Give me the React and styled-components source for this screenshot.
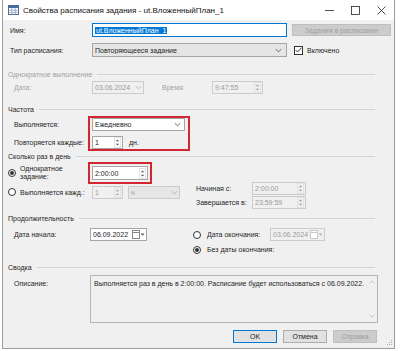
import React from 'react';
import styled, { createGlobalStyle } from 'styled-components';

const GlobalStyle = createGlobalStyle`
  html, body { margin: 0; padding: 0; background: #ffffff; }
  body {
    font-family: 'Liberation Sans', Arial, sans-serif;
    font-size: 7px;
    color: #1e1e1e;
  }
  * { box-sizing: border-box; }
`;

const Window = styled.div`
  margin-left: 2px;
  width: 393px;
  height: 349px;
  border: 1px solid #9c9c9c;
  border-top: none;
  background: #f0f0f0;
  display: flex;
  flex-direction: column;
  overflow: hidden;
`;

const TitleBar = styled.div`
  height: 20px;
  flex-shrink: 0;
  background: #ffffff;
  display: flex;
  align-items: center;
  padding-left: 5px;
`;

const TitleText = styled.span`
  flex: 1;
  margin-left: 4px;
  font-size: 8px;
  color: #111;
  white-space: nowrap;
`;

const WinButton = styled.div`
  width: 26px;
  height: 20px;
  display: flex;
  align-items: center;
  justify-content: center;
`;

const Body = styled.div`
  flex: 1;
  position: relative;
  padding: 0 3px 0 4px;
  display: flex;
  flex-direction: column;
`;

const TopRow = styled.div`
  height: 20px;
  display: flex;
  align-items: center;
  padding-left: 3px;
`;

const Label = styled.span`
  width: ${(p) => p.$w || 82}px;
  flex-shrink: 0;
  white-space: nowrap;
  color: ${(p) => (p.$disabled ? '#a3a3a3' : '#1e1e1e')};
`;

const Field = styled.div`
  width: ${(p) => p.$w}px;
  height: ${(p) => p.$h || 13}px;
  flex-shrink: 0;
  display: flex;
  align-items: center;
  padding: 0 1px 0 2px;
  background: ${(p) => p.$bg || (p.$disabled ? '#f0f0f0' : '#ffffff')};
  border: 1px solid ${(p) => (p.$focus ? '#0078d7' : p.$disabled ? '#cccccc' : '#a6a6a6')};
  color: ${(p) => (p.$disabled ? '#9a9a9a' : '#1e1e1e')};
  white-space: nowrap;
`;

const FieldText = styled.span`
  flex: 1;
  overflow: hidden;
`;

const Selected = styled.span`
  background: #0078d7;
  color: #ffffff;
  padding: 0 1px;
`;

const WinBtn = styled.div`
  width: ${(p) => p.$w}px;
  height: ${(p) => p.$h || 13}px;
  flex-shrink: 0;
  margin-left: ${(p) => p.$ml || 0}px;
  display: flex;
  align-items: center;
  justify-content: center;
  background: ${(p) => (p.$disabled ? '#cccccc' : '#e1e1e1')};
  border: 1px solid ${(p) => (p.$primary ? '#0078d7' : p.$disabled ? '#bfbfbf' : '#adadad')};
  color: ${(p) => (p.$disabled ? '#a0a0a0' : '#1e1e1e')};
  white-space: nowrap;
`;

const Check = styled.span`
  width: 9px;
  height: 9px;
  border: 1px solid #333;
  background: #fff;
  display: flex;
  align-items: center;
  justify-content: center;
  margin: 0 4px 0 ${(p) => p.$ml || 0}px;
`;

const Radio = styled.span`
  width: 8px;
  height: 8px;
  flex-shrink: 0;
  border-radius: 50%;
  border: 1px solid #333;
  background: #fff;
  margin-right: ${(p) => p.$mr || 4}px;
  display: flex;
  align-items: center;
  justify-content: center;
  &::after {
    content: '';
    width: 4px;
    height: 4px;
    border-radius: 50%;
    background: ${(p) => (p.$checked ? '#333' : 'transparent')};
  }
`;

const Group = styled.div`
  margin: ${(p) => p.$mt || 0}px 16px 0 1px;
`;

const GroupHeader = styled.div`
  height: 12px;
  display: flex;
  align-items: center;
  color: ${(p) => (p.$disabled ? '#a3a3a3' : '#1e1e1e')};
  white-space: nowrap;
  &::after {
    content: '';
    flex: 1;
    height: 1px;
    margin-left: 5px;
    background: #d4d4d4;
  }
`;

const GroupRow = styled.div`
  display: flex;
  align-items: ${(p) => p.$align || 'center'};
  height: ${(p) => (p.$h ? p.$h + 'px' : 'auto')};
  margin-top: ${(p) => p.$mt || 0}px;
  padding-left: ${(p) => (p.$pl === undefined ? 6 : p.$pl)}px;
`;

const Column = styled.div`
  display: flex;
  flex-direction: column;
  width: ${(p) => (p.$w ? p.$w + 'px' : 'auto')};
  margin-top: ${(p) => p.$mt || 0}px;
  margin-left: ${(p) => p.$ml || 0}px;
  flex-shrink: 0;
`;

const SubRow = styled.div`
  display: flex;
  align-items: center;
  height: ${(p) => p.$h}px;
  margin-top: ${(p) => p.$mt || 0}px;
  white-space: nowrap;
`;

const RedBox = styled.div`
  border: 2px solid #d22630;
  padding: ${(p) => p.$pad};
  display: flex;
  flex-direction: column;
  gap: ${(p) => p.$gap || 0}px;
`;

const TwoLine = styled.span`
  width: ${(p) => p.$w}px;
  line-height: 8.5px;
  flex-shrink: 0;
`;

const Unit = styled.span`
  margin-left: 6px;
`;

const TextArea = styled.div`
  width: 288px;
  height: 48px;
  border: 1px solid #b4b4b4;
  background: #f0f0f0;
  display: flex;
  flex-shrink: 0;
`;

const AreaText = styled.div`
  flex: 1;
  padding: 3px 3px;
  line-height: 9px;
  white-space: nowrap;
`;

const ScrollBar = styled.div`
  width: 10px;
  display: flex;
  flex-direction: column;
  justify-content: space-between;
  align-items: center;
  padding: 4px 0;
`;

const ButtonRow = styled.div`
  display: flex;
  justify-content: flex-end;
  gap: 6px;
  margin: 7px 14px 0 0;
`;

const Grip = styled.div`
  position: absolute;
  right: 1px;
  bottom: 1px;
`;

const Chevron = ({ color = '#5a5a5a' }) => (
  <svg width="7" height="5" viewBox="0 0 7 5">
    <path d="M0.8 1.2 L3.5 3.8 L6.2 1.2" fill="none" stroke={color} strokeWidth="0.9" />
  </svg>
);

const Spin = ({ color = '#555' }) => (
  <svg width="7" height="11" viewBox="0 0 7 11">
    <rect x="0.5" y="0.5" width="6" height="10" fill="none" stroke="#e2e2e2" />
    <path d="M1.8 4.2 L3.5 2.4 L5.2 4.2 Z" fill={color} />
    <path d="M1.8 6.8 L3.5 8.6 L5.2 6.8 Z" fill={color} />
  </svg>
);

const CalDrop = ({ color = '#555', box = '#888' }) => (
  <svg width="13" height="9" viewBox="0 0 13 9" style={{ flexShrink: 0 }}>
    <rect x="0.5" y="0.5" width="7" height="8" fill="#fff" stroke={box} />
    <line x1="0.5" y1="2.5" x2="7.5" y2="2.5" stroke={box} />
    <path d="M8.6 3.5 L10.6 5.8 L12.6 3.5 Z" fill={color} />
  </svg>
);

const Arrow = ({ up }) => (
  <svg width="6" height="4" viewBox="0 0 6 4">
    <path d={up ? 'M0.5 3.5 L3 0.8 L5.5 3.5' : 'M0.5 0.5 L3 3.2 L5.5 0.5'} fill="none" stroke="#c2c2c2" strokeWidth="0.9" />
  </svg>
);

export default function App() {
  return (
    <>
      <GlobalStyle />
      <Window>
        <TitleBar>
          <svg width="11" height="10" viewBox="0 0 11 10">
            <rect x="0.5" y="0.5" width="10" height="9" fill="#fff" stroke="#4a6d9c" />
            <rect x="0.5" y="0.5" width="10" height="2.5" fill="#4a6d9c" />
            <path d="M0.5 5.2 H10.5 M0.5 7.4 H10.5 M3.8 3 V9.5 M7.2 3 V9.5" stroke="#7d97bb" strokeWidth="0.7" />
          </svg>
          <TitleText>Свойства расписания задания - ut.ВложенныйПлан_1</TitleText>
          <WinButton>
            <svg width="9" height="9" viewBox="0 0 9 9">
              <line x1="0" y1="4.5" x2="9" y2="4.5" stroke="#222" strokeWidth="0.8" />
            </svg>
          </WinButton>
          <WinButton>
            <svg width="9" height="9" viewBox="0 0 9 9">
              <rect x="0.5" y="0.5" width="8" height="8" fill="none" stroke="#222" strokeWidth="0.8" />
            </svg>
          </WinButton>
          <WinButton>
            <svg width="9" height="9" viewBox="0 0 9 9">
              <path d="M0.5 0.5 L8.5 8.5 M8.5 0.5 L0.5 8.5" stroke="#222" strokeWidth="0.8" />
            </svg>
          </WinButton>
        </TitleBar>

        <Body>
          <TopRow>
            <Label>Имя:</Label>
            <Field $w={195} $h={14} $focus>
              <FieldText>
                <Selected>ut.ВложенныйПлан_1</Selected>
              </FieldText>
            </Field>
            <WinBtn $w={99} $h={12} $ml={5} $disabled>
              Задания в расписании
            </WinBtn>
          </TopRow>
          <TopRow>
            <Label>Тип расписания:</Label>
            <Field $w={195} $h={14} $bg="#e5e5e5">
              <FieldText>Повторяющееся задание</FieldText>
              <Chevron />
              <span style={{ width: 3 }} />
            </Field>
            <Check $ml={7}>
              <svg width="7" height="6" viewBox="0 0 7 6">
                <path d="M0.6 3 L2.6 5 L6.4 0.8" fill="none" stroke="#222" strokeWidth="0.9" />
              </svg>
            </Check>
            <span>Включено</span>
          </TopRow>

          <Group $mt={8}>
            <GroupHeader $disabled>Однократное выполнение</GroupHeader>
            <GroupRow $h={14}>
              <Label $w={78} $disabled>
                Дата:
              </Label>
              <Field $w={52} $disabled>
                <FieldText>03.06.2024</FieldText>
                <Chevron color="#b0b0b0" />
              </Field>
              <Label $w={50} $disabled style={{ marginLeft: 18 }}>
                Время:
              </Label>
              <Field $w={51} $disabled>
                <FieldText>9:47:55</FieldText>
                <Spin color="#9a9a9a" />
              </Field>
            </GroupRow>
          </Group>

          <Group $mt={9}>
            <GroupHeader>Частота</GroupHeader>
            <GroupRow $align="flex-start" $mt={1}>
              <Column $w={74} $mt={2}>
                <SubRow $h={13}>Выполняется:</SubRow>
                <SubRow $h={13} $mt={5}>
                  Повторяется каждые:
                </SubRow>
              </Column>
              <RedBox $pad="0 3px 0 2px" $gap={5}>
                <Field $w={93}>
                  <FieldText>Ежедневно</FieldText>
                  <Chevron />
                  <span style={{ width: 2 }} />
                </Field>
                <SubRow $h={13}>
                  <Field $w={31}>
                    <FieldText>1</FieldText>
                    <Spin />
                  </Field>
                  <Unit>дн.</Unit>
                </SubRow>
              </RedBox>
            </GroupRow>
          </Group>

          <Group $mt={-1}>
            <GroupHeader>Сколько раз в день</GroupHeader>
            <GroupRow $align="flex-start" $pl={0}>
              <Column $w={185}>
                <SubRow $h={22}>
                  <Radio $checked />
                  <TwoLine $w={68}>
                    Однократное
                    <br />
                    задание:
                  </TwoLine>
                  <RedBox $pad="2px 2px 2px 2px">
                    <Field $w={56} $h={14}>
                      <FieldText>2:00:00</FieldText>
                      <Spin />
                    </Field>
                  </RedBox>
                </SubRow>
                <SubRow $h={16}>
                  <Radio />
                  <Label $w={68}>Выполняется кажд.:</Label>
                  <Field $w={31} $disabled style={{ marginLeft: 4 }}>
                    <FieldText>1</FieldText>
                    <Spin color="#9a9a9a" />
                  </Field>
                  <Field $w={52} $disabled $bg="#e6e6e6" style={{ marginLeft: 5 }}>
                    <FieldText>ч</FieldText>
                    <Chevron color="#b0b0b0" />
                  </Field>
                </SubRow>
              </Column>
              <Column $mt={19} $ml={3}>
                <SubRow $h={14}>
                  <Label $w={56}>Начиная с:</Label>
                  <Field $w={54} $disabled>
                    <FieldText>2:00:00</FieldText>
                    <Spin color="#9a9a9a" />
                  </Field>
                </SubRow>
                <SubRow $h={14}>
                  <Label $w={56}>Завершается в:</Label>
                  <Field $w={54} $disabled>
                    <FieldText>23:59:59</FieldText>
                    <Spin color="#9a9a9a" />
                  </Field>
                </SubRow>
              </Column>
            </GroupRow>
          </Group>

          <Group $mt={3}>
            <GroupHeader>Продолжительность</GroupHeader>
            <GroupRow $align="flex-start" $mt={3}>
              <SubRow $h={15}>
                <Label $w={76}>Дата начала:</Label>
                <Field $w={57}>
                  <FieldText>06.09.2022</FieldText>
                  <CalDrop />
                </Field>
              </SubRow>
              <Column $ml={46}>
                <SubRow $h={15}>
                  <Radio $mr={6} />
                  <Label $w={63}>Дата окончания:</Label>
                  <Field $w={55} $disabled>
                    <FieldText>03.06.2024</FieldText>
                    <CalDrop color="#b0b0b0" box="#c8c8c8" />
                  </Field>
                </SubRow>
                <SubRow $h={15}>
                  <Radio $mr={6} $checked />
                  <span>Без даты окончания:</span>
                </SubRow>
              </Column>
            </GroupRow>
          </Group>

          <Group $mt={4}>
            <GroupHeader>Сводка</GroupHeader>
            <GroupRow $align="flex-start" $mt={2}>
              <Label $w={76} style={{ paddingTop: 5 }}>
                Описание:
              </Label>
              <TextArea>
                <AreaText>
                  Выполняется раз в день в 2:00:00. Расписание будет использоваться с 06.09.2022.
                </AreaText>
                <ScrollBar>
                  <Arrow up />
                  <Arrow />
                </ScrollBar>
              </TextArea>
            </GroupRow>
          </Group>

          <ButtonRow>
            <WinBtn $w={44} $primary>
              OK
            </WinBtn>
            <WinBtn $w={44}>Отмена</WinBtn>
            <WinBtn $w={44} $disabled>
              Справка
            </WinBtn>
          </ButtonRow>

          <Grip>
            <svg width="6" height="6" viewBox="0 0 6 6">
              <rect x="4" y="0" width="1" height="1" fill="#aaa" />
              <rect x="2" y="2" width="1" height="1" fill="#aaa" />
              <rect x="4" y="2" width="1" height="1" fill="#aaa" />
              <rect x="0" y="4" width="1" height="1" fill="#aaa" />
              <rect x="2" y="4" width="1" height="1" fill="#aaa" />
              <rect x="4" y="4" width="1" height="1" fill="#aaa" />
            </svg>
          </Grip>
        </Body>
      </Window>
    </>
  );
}
